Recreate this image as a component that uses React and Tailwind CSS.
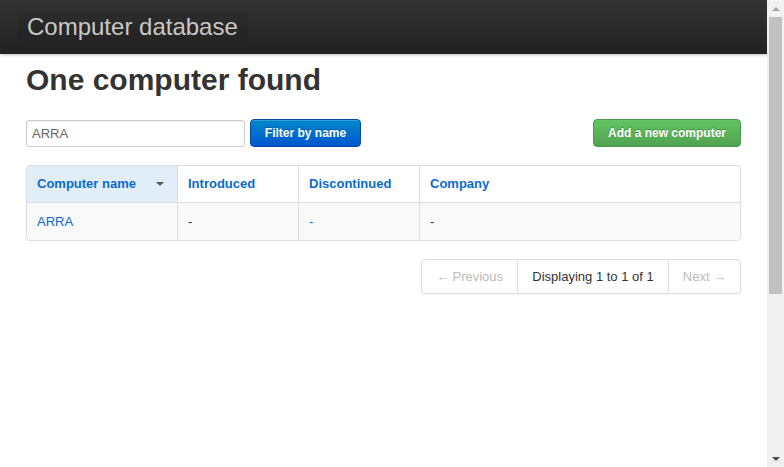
const columns = [
  { label: "Computer name", width: "w-[150px]", sorted: true },
  { label: "Introduced", width: "w-[121px]" },
  { label: "Discontinued", width: "w-[121px]" },
  { label: "Company", width: "flex-1" },
];

const ScrollBar = () => (
  <div className="w-[17px] h-full bg-[#f1f1f1] flex flex-col items-center">
    <div className="h-[17px] flex items-center justify-center">
      <div className="w-0 h-0 border-l-[4px] border-r-[4px] border-b-[4px] border-l-transparent border-r-transparent border-b-[#a3a3a3]" />
    </div>
    <div className="w-[13px] h-[277px] bg-[#c1c1c1]" />
    <div className="flex-1" />
    <div className="h-[17px] flex items-center justify-center">
      <div className="w-0 h-0 border-l-[4px] border-r-[4px] border-t-[4px] border-l-transparent border-r-transparent border-t-[#505050]" />
    </div>
  </div>
);

export default function App() {
  return (
    <div className="flex h-[467px] overflow-hidden bg-white font-['Liberation_Sans',Arial,sans-serif] text-[#333]">
      <div className="flex-1 min-w-0">
        {/* top bar */}
        <header className="h-[54px] bg-gradient-to-b from-[#333333] to-[#222222] shadow-[0_1px_3px_rgba(0,0,0,0.25)] flex items-center pl-[17px]">
          <div className="bg-black/[0.05] px-[10px] h-[28px] flex items-center text-[24px] text-[#c8c8c8]">
            Computer database
          </div>
        </header>

        <main className="px-[26px] pt-[8px]">
          <h1 className="text-[30px] leading-[36px] font-bold text-[#333]">One computer found</h1>

          <div className="mt-[21px] flex items-center">
            <input
              defaultValue="ARRA"
              className="w-[219px] h-[27px] border border-[#cccccc] rounded-[3px] px-[5px] text-[13px] text-[#666] shadow-[inset_0_1px_1px_rgba(0,0,0,0.075)] outline-none"
            />
            <button className="ml-[5px] w-[111px] h-[28px] rounded-[4px] bg-gradient-to-b from-[#0088cc] to-[#0055cc] border border-[#0048ab] text-white text-[12px] font-bold shadow-[inset_0_1px_0_rgba(255,255,255,0.2)] [text-shadow:0_-1px_0_rgba(0,0,0,0.25)]">
              Filter by name
            </button>
            <div className="flex-1" />
            <button className="w-[148px] h-[28px] rounded-[4px] bg-gradient-to-b from-[#62c462] to-[#51a351] border border-[#4a9a4a] text-white text-[12px] font-bold [text-shadow:0_-1px_0_rgba(0,0,0,0.25)]">
              Add a new computer
            </button>
          </div>

          <div className="mt-[18px] border border-[#dddddd] rounded-[4px] overflow-hidden text-[13px]">
            <div className="flex h-[37px] border-b border-[#dddddd]">
              {columns.map((c, i) => (
                <div
                  key={c.label}
                  className={`${c.width} flex items-center px-[10px] font-bold text-[#0a6ad0] ${i > 0 ? "border-l border-[#dddddd]" : ""} ${c.sorted ? "bg-[#e1eef7]" : ""}`}
                >
                  <span className="flex-1">{c.label}</span>
                  {c.sorted && (
                    <span className="mr-[3px] w-0 h-0 border-l-[4px] border-r-[4px] border-t-[4px] border-l-transparent border-r-transparent border-t-[#555]" />
                  )}
                </div>
              ))}
            </div>
            <div className="flex h-[37px] bg-[#f9f9f9]">
              <div className="w-[150px] flex items-center px-[10px] text-[#0a6ad0]">ARRA</div>
              <div className="w-[121px] flex items-center px-[10px] border-l border-[#dddddd] text-[#333]">-</div>
              <div className="w-[121px] flex items-center px-[10px] border-l border-[#dddddd] text-[#0a6ad0]">-</div>
              <div className="flex-1 flex items-center px-[10px] border-l border-[#dddddd] text-[#333]">-</div>
            </div>
          </div>

          <div className="mt-[18px] flex justify-end">
            <div className="flex h-[35px] border border-[#dddddd] rounded-[4px] shadow-[0_1px_2px_rgba(0,0,0,0.05)] text-[13px]">
              <div className="w-[95px] flex items-center justify-center text-[#bbbbbb]">← Previous</div>
              <div className="w-[151px] flex items-center justify-center border-l border-[#dddddd] text-[#333]">Displaying 1 to 1 of 1</div>
              <div className="w-[72px] flex items-center justify-center border-l border-[#dddddd] text-[#bbbbbb]">Next →</div>
            </div>
          </div>
        </main>
      </div>
      <ScrollBar />
    </div>
  );
}
